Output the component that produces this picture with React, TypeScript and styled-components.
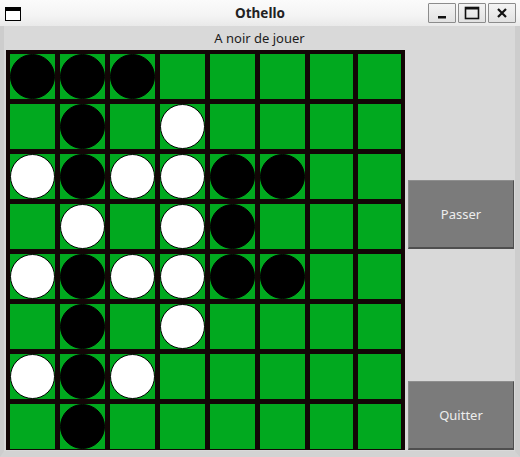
import React from "react";
import styled, { createGlobalStyle } from "styled-components";

const Global = createGlobalStyle`
  html, body { margin: 0; padding: 0; background: #d9d9d9; }
  body { font-family: "Noto Sans", "DejaVu Sans", sans-serif; }
`;

const Window = styled.div`
  width: 520px;
  height: 457px;
  display: flex;
  flex-direction: column;
  overflow: hidden;
  background: #d9d9d9;
`;

const TitleBar = styled.div`
  height: 26px;
  flex: none;
  display: flex;
  align-items: center;
  position: relative;
  background: linear-gradient(#fbfbfb, #f4f4f4 60%, #e9e9e9);
  padding: 0 4px 0 5px;
`;

const AppIcon = styled.div`
  width: 16px;
  height: 14px;
  box-sizing: border-box;
  border: 1.5px solid #000;
  border-top-width: 4px;
  background: #fff;
  margin-top: 1px;
`;

const Title = styled.div`
  position: absolute;
  left: 0;
  right: 0;
  text-align: center;
  font-family: "Noto Sans", "DejaVu Sans", sans-serif;
  font-weight: bold;
  font-size: 13.5px;
  color: #222;
  pointer-events: none;
`;

const WinButtons = styled.div`
  margin-left: auto;
  display: flex;
  gap: 2px;
`;

const WinButton = styled.div`
  width: 28px;
  height: 20px;
  box-sizing: border-box;
  border: 1px solid #8c8c8c;
  border-radius: 1px;
  background: linear-gradient(#f4f4f4, #e2e2e2);
  display: flex;
  align-items: center;
  justify-content: center;
`;

const Body = styled.div`
  flex: 1;
  display: flex;
  flex-direction: column;
  border-left: 4px solid #cdcdcd;
  border-right: 5px solid #cdcdcd;
  border-bottom: 6px solid #d3d3d3;
  background: #d9d9d9;
`;

const StatusLabel = styled.div`
  height: 24px;
  display: flex;
  align-items: center;
  justify-content: center;
  font-size: 13px;
  color: #1c1c1c;
`;

const Main = styled.div`
  display: flex;
  padding-left: 2px;
`;

const Board = styled.div`
  width: 399px;
  height: 400px;
  box-sizing: border-box;
  background: #120606;
  padding: 4px;
  display: grid;
  grid-template-columns: repeat(8, 1fr);
  grid-template-rows: repeat(8, 1fr);
  gap: 5px;
`;

const Cell = styled.div`
  background: #01a91f;
  display: flex;
  align-items: center;
  justify-content: center;
  overflow: visible;
`;

const Disc = styled.div<{ $white: boolean }>`
  flex: none;
  width: 45px;
  height: 45px;
  box-sizing: border-box;
  border-radius: 50%;
  background: ${(p) => (p.$white ? "#ffffff" : "#000000")};
  border: 1px solid #000;
`;

const Side = styled.div`
  flex: 1;
  display: flex;
  flex-direction: column;
  justify-content: space-between;
  padding: 130px 1px 0 3px;
`;

const ActionButton = styled.div`
  height: 69px;
  box-sizing: border-box;
  background: #7b7b7b;
  border-top: 1px solid #8e8e8e;
  border-left: 1px solid #8a8a8a;
  border-right: 1px solid #4e4e4e;
  border-bottom: 2px solid #4e4e4e;
  display: flex;
  align-items: center;
  justify-content: center;
  color: #ededed;
  font-size: 13px;
`;

const layout = [
  "BBB.....",
  ".B.W....",
  "WBWWBB..",
  ".W.WB...",
  "WBWWBB..",
  ".B.W....",
  "WBW.....",
  ".B......",
];

export default function App() {
  return (
    <Window>
      <Global />
      <TitleBar>
        <AppIcon />
        <Title>Othello</Title>
        <WinButtons>
          <WinButton>
            <svg width="12" height="12" viewBox="0 0 12 12">
              <rect x="2" y="9" width="8" height="2.5" fill="#111" />
            </svg>
          </WinButton>
          <WinButton>
            <svg width="16" height="14" viewBox="0 0 16 14">
              <rect x="1.5" y="1.5" width="13" height="11" fill="none" stroke="#111" strokeWidth="1.6" />
              <rect x="1" y="1" width="14" height="2.5" fill="#111" />
            </svg>
          </WinButton>
          <WinButton>
            <svg width="12" height="12" viewBox="0 0 12 12">
              <path d="M2 2 L10 10 M10 2 L2 10" stroke="#111" strokeWidth="2.2" />
            </svg>
          </WinButton>
        </WinButtons>
      </TitleBar>
      <Body>
        <StatusLabel>A noir de jouer</StatusLabel>
        <Main>
          <Board>
            {layout.flatMap((row, r) =>
              row.split("").map((c, i) => (
                <Cell key={`${r}-${i}`}>
                  {c !== "." && <Disc $white={c === "W"} />}
                </Cell>
              ))
            )}
          </Board>
          <Side>
            <ActionButton>Passer</ActionButton>
            <ActionButton>Quitter</ActionButton>
          </Side>
        </Main>
      </Body>
    </Window>
  );
}
